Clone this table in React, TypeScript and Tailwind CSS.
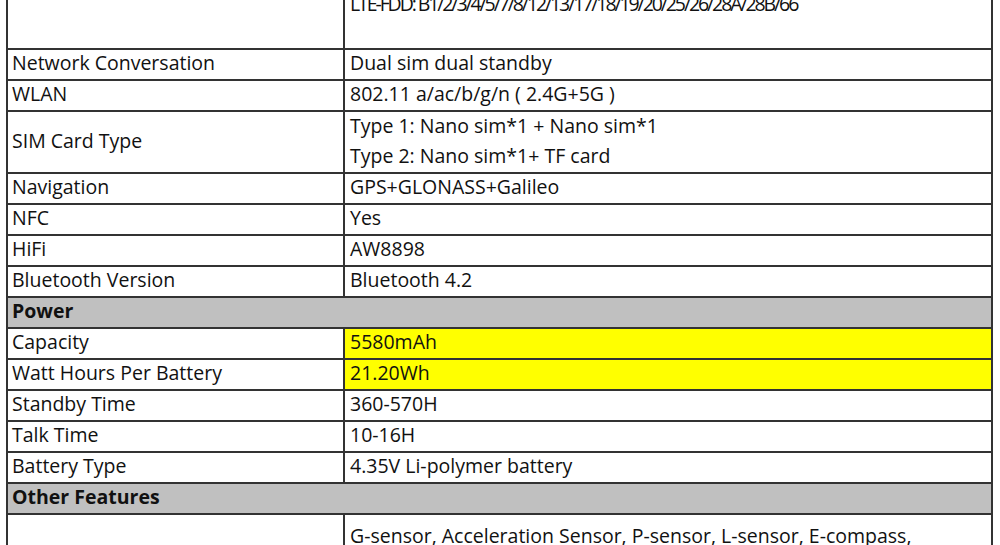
import React from "react";

type Row =
  | { kind: "spec"; label: string; values: string[]; highlight?: boolean; tall?: boolean }
  | { kind: "section"; title: string };

const ROWS: Row[] = [
  { kind: "spec", label: "Network Conversation", values: ["Dual sim dual standby"] },
  { kind: "spec", label: "WLAN", values: ["802.11 a/ac/b/g/n ( 2.4G+5G )"] },
  {
    kind: "spec",
    label: "SIM Card Type",
    values: ["Type 1: Nano sim*1 + Nano sim*1", "Type 2: Nano sim*1+ TF card"],
    tall: true,
  },
  { kind: "spec", label: "Navigation", values: ["GPS+GLONASS+Galileo"] },
  { kind: "spec", label: "NFC", values: ["Yes"] },
  { kind: "spec", label: "HiFi", values: ["AW8898"] },
  { kind: "spec", label: "Bluetooth Version", values: ["Bluetooth 4.2"] },
  { kind: "section", title: "Power" },
  { kind: "spec", label: "Capacity", values: ["5580mAh"], highlight: true },
  { kind: "spec", label: "Watt Hours Per Battery", values: ["21.20Wh"], highlight: true },
  { kind: "spec", label: "Standby Time", values: ["360-570H"] },
  { kind: "spec", label: "Talk Time", values: ["10-16H"] },
  { kind: "spec", label: "Battery Type", values: ["4.35V Li-polymer battery"] },
  { kind: "section", title: "Other Features" },
];

function SpecRow({ row }: { row: Row }) {
  if (row.kind === "section") {
    return (
      <div className="flex h-[31px] items-center border-t-2 border-[#333] bg-[#c0c0c0] pb-[3px] pl-[4px] font-bold">
        {row.title}
      </div>
    );
  }
  return (
    <div
      className={`flex border-t-2 border-[#333] ${row.tall ? "h-[62px]" : "h-[31px]"}`}
    >
      <div className="flex w-[337px] shrink-0 items-center border-r-2 border-[#333] pb-[3px] pl-[4px]">
        {row.label}
      </div>
      <div
        className={`flex flex-1 flex-col justify-center pb-[3px] pl-[5px] ${
          row.highlight ? "bg-[#ffff00]" : ""
        }`}
      >
        {row.values.map((v) => (
          <div key={v} className="leading-[30px]">
            {v}
          </div>
        ))}
      </div>
    </div>
  );
}

export default function App() {
  return (
    <div className="h-[545px] w-[1000px] overflow-hidden bg-white font-['Open_Sans',sans-serif] text-[19.5px] text-[#111]">
      <div className="ml-[6px] mt-[-16px] w-[987px] border-x-2 border-[#333]">
        <div className="flex h-[64px]">
          <div className="w-[337px] shrink-0 border-r-2 border-[#333]" />
          <div className="flex-1 pl-[5px] pt-[5px] leading-[30px] tracking-[-2.1px]">
            LTE-FDD: B1/2/3/4/5/7/8/12/13/17/18/19/20/25/26/28A/28B/66
          </div>
        </div>
        {ROWS.map((row, i) => (
          <SpecRow key={i} row={row} />
        ))}
        <div className="flex h-[100px] border-t-2 border-[#333]">
          <div className="w-[337px] shrink-0 border-r-2 border-[#333]" />
          <div className="flex-1 pl-[5px] pt-[6px] leading-[30px]">
            G-sensor, Acceleration Sensor, P-sensor, L-sensor, E-compass,
          </div>
        </div>
      </div>
    </div>
  );
}
